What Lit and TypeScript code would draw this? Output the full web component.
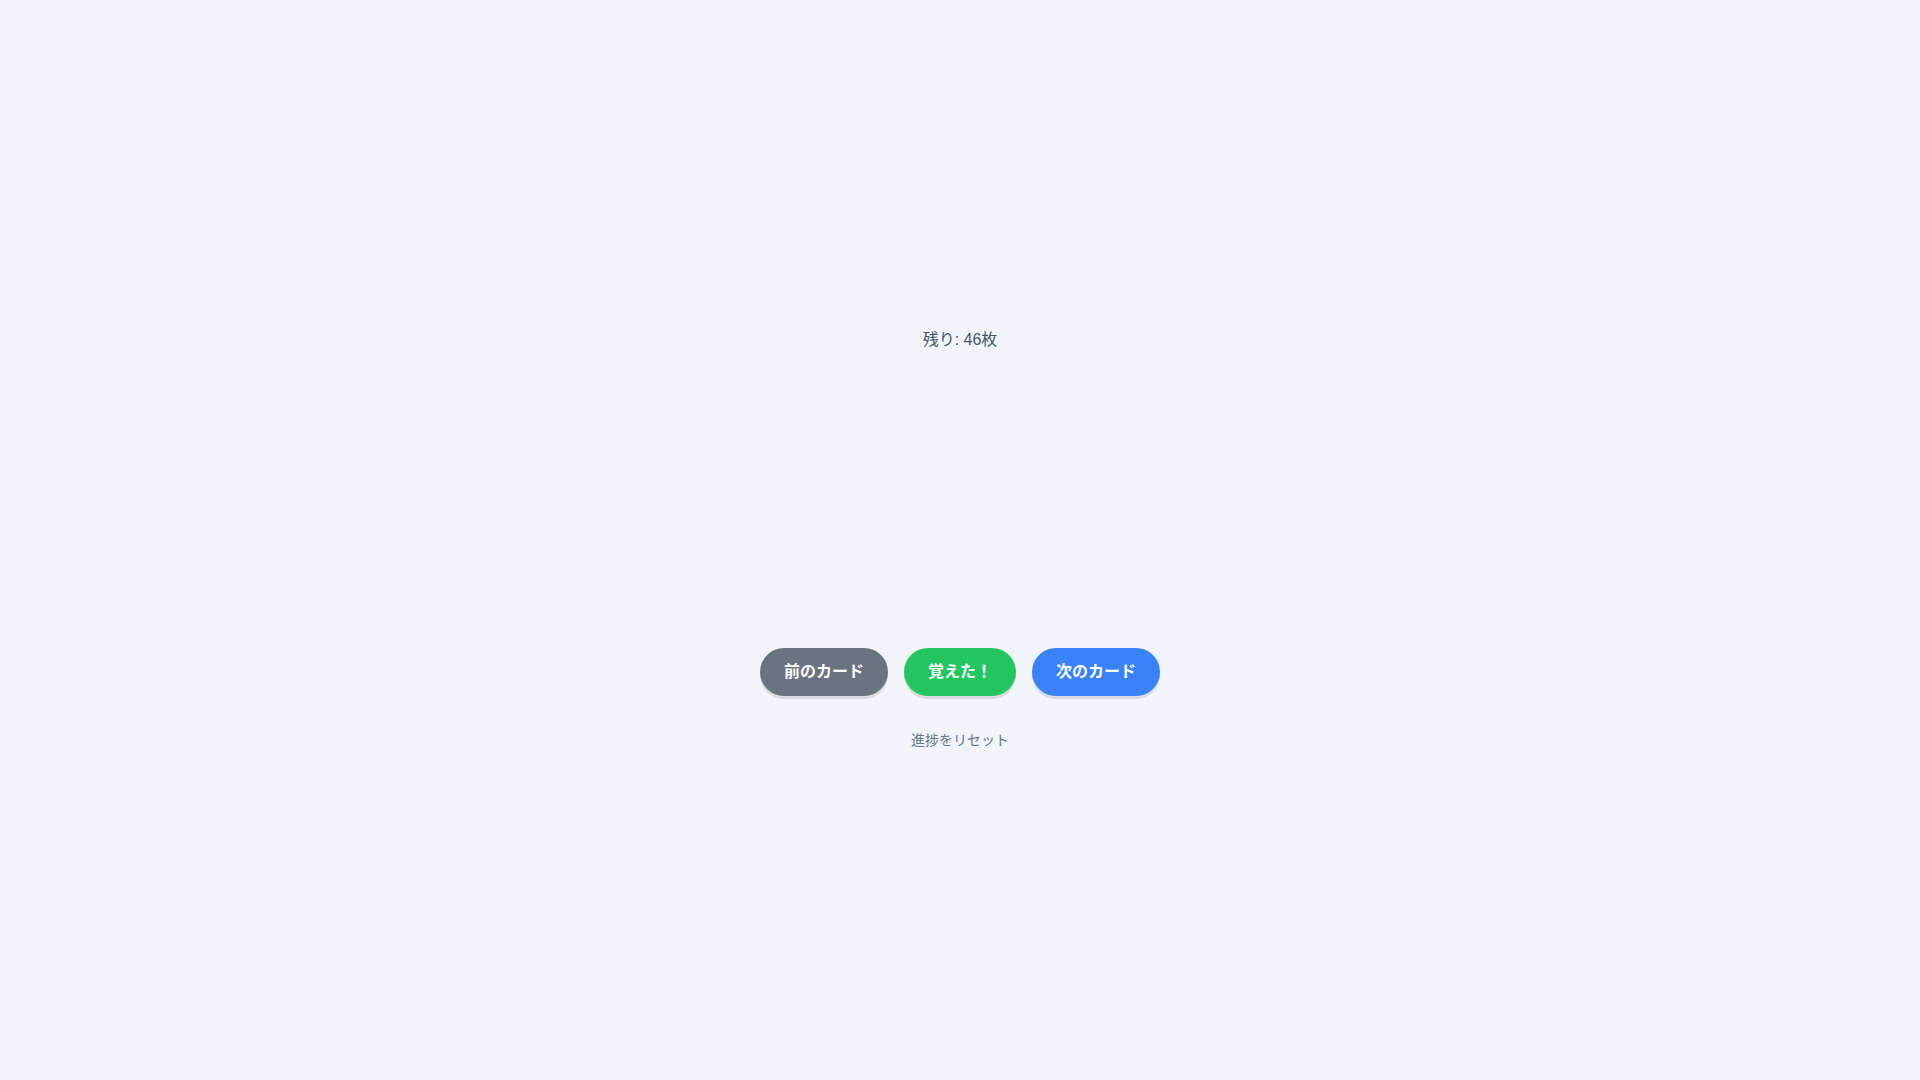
import { LitElement, html, css } from 'lit'
import { customElement, state } from 'lit/decorators.js'

/**
 * Flashcard deck with a counter and navigation
 */
@customElement('app-root')
export class FlashcardApp extends LitElement {
  static styles = css`
    :host {
      display: flex;
      flex-direction: column;
      align-items: center;
      justify-content: center;
      box-sizing: border-box;
      min-height: 100vh;
      padding: 16px;
      background: #f1f5f9;
      color: #475569;
      font-family: "Liberation Sans", "Noto Sans CJK JP", sans-serif;
      font-size: 16px;
      line-height: 24px;
    }

    .counter {
      margin: 0 0 16px;
    }

    .stage {
      width: 100%;
      max-width: 400px;
      height: 248px;
      margin-bottom: 32px;
    }

    .controls {
      display: flex;
      flex-wrap: wrap;
      justify-content: center;
      gap: 16px;
      margin-bottom: 32px;
    }

    button {
      border: none;
      font-family: inherit;
      cursor: pointer;
    }

    .btn {
      padding: 12px 24px;
      border-radius: 24px;
      color: #fff;
      font-size: 16px;
      font-weight: 700;
      line-height: 24px;
      box-shadow: 0 3px 0 rgba(0, 0, 0, 0.1);
    }

    .prev {
      background: #6b7280;
    }

    .learned {
      background: #22c55e;
    }

    .next {
      background: #3b82f6;
    }

    .reset {
      padding: 0;
      background: none;
      color: #64748b;
      font-size: 14px;
      line-height: 24px;
    }

    .reset:hover {
      text-decoration: underline;
    }
  `;

  @state() private remaining = 46

  private learn() {
    this.remaining = Math.max(0, this.remaining - 1)
  }

  private reset() {
    this.remaining = 46
  }

  render() {
    return html`
      <p class="counter">残り: ${this.remaining}枚</p>
      <div class="stage"></div>
      <div class="controls">
        <button class="btn prev" type="button">前のカード</button>
        <button class="btn learned" type="button" @click=${this.learn}>覚えた！</button>
        <button class="btn next" type="button">次のカード</button>
      </div>
      <button class="reset" type="button" @click=${this.reset}>進捗をリセット</button>
    `;
  }
}
